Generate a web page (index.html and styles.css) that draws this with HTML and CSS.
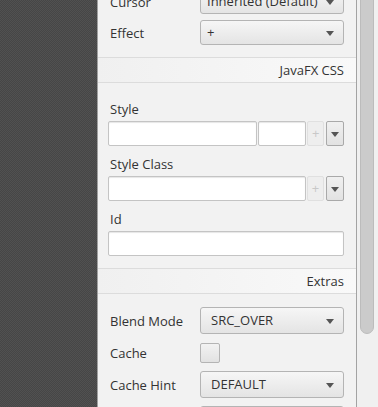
FILE: index.html
```html
<!DOCTYPE html>
<html lang="en">
<head>
  <meta charset="UTF-8" />
  <title>Inspector</title>
  <link rel="stylesheet" href="styles.css">
</head>
<body>
  <div class="canvas"></div>

  <div class="inspector">
    <div class="inspector-content">
      <div class="props">
        <div class="prop-label">Cursor</div>
        <div class="combo">Inherited (Default)</div>
        <div class="prop-label">Effect</div>
        <div class="combo">+</div>
      </div>

      <div class="section-header">JavaFX CSS</div>

      <div class="css-props">
        <div class="field-label">Style</div>
        <div class="field-row">
          <div class="text-field wide"></div>
          <div class="text-field small"></div>
          <div class="plus-btn">+</div>
          <div class="menu-btn"></div>
        </div>

        <div class="field-label">Style Class</div>
        <div class="field-row">
          <div class="text-field grow"></div>
          <div class="plus-btn">+</div>
          <div class="menu-btn"></div>
        </div>

        <div class="field-label">Id</div>
        <div class="field-row">
          <div class="text-field grow"></div>
        </div>
      </div>

      <div class="section-header">Extras</div>

      <div class="props extras">
        <div class="prop-label">Blend Mode</div>
        <div class="combo tall">SRC_OVER</div>
        <div class="prop-label">Cache</div>
        <div><div class="checkbox"></div></div>
        <div class="prop-label">Cache Hint</div>
        <div class="combo tall">DEFAULT</div>
        <div class="prop-label"></div>
        <div class="combo tall"></div>
      </div>
    </div>
  </div>

  <div class="scrollbar">
    <div class="thumb"></div>
  </div>
</body>
</html>
```

FILE: styles.css
```css
* {
  box-sizing: border-box;
}
body {
  margin: 0;
  height: 407px;
  overflow: hidden;
  display: flex;
  font-family: 'Open Sans', 'Segoe UI', sans-serif;
  font-size: 13px;
  color: #333;
  background: #f2f2f2;
}

.canvas {
  width: 98px;
  flex-shrink: 0;
  background: repeating-conic-gradient(#464646 0 25%, #515151 0 50%) 0 0 / 2px 2px;
  border-right: 1px solid #a0a0a0;
}

.inspector {
  width: 259px;
  flex-shrink: 0;
  background: #f2f2f2;
  border-right: 1px solid #a3a3a3;
  overflow: hidden;
}

.inspector-content {
  margin-top: -11px;
}

/* label / control grid */
.props {
  display: grid;
  grid-template-columns: 90px 144px;
  row-gap: 6px;
  align-items: center;
  padding: 0 12px 12px 12px;
}

.props.extras {
  padding-top: 13px;
  row-gap: 8px;
}

.prop-label {
  line-height: 18px;
  white-space: nowrap;
}

.combo {
  position: relative;
  height: 25px;
  line-height: 23px;
  padding-left: 6px;
  border: 1px solid #b4b4b4;
  border-radius: 3px;
  background: linear-gradient(#f6f6f6, #e4e4e4);
  white-space: nowrap;
  overflow: hidden;
}

.combo.tall {
  height: 27px;
  line-height: 25px;
  padding-left: 10px;
}

.combo::after {
  content: "";
  position: absolute;
  right: 9px;
  top: 50%;
  margin-top: -2px;
  border: 4px solid transparent;
  border-bottom: none;
  border-top: 5px solid #555;
}

.section-header {
  height: 26px;
  line-height: 24px;
  padding-right: 12px;
  text-align: right;
  border-top: 1px solid #dcdcdc;
  border-bottom: 1px solid #dcdcdc;
  background: linear-gradient(to right, #f0f0f0, #f9f9f9);
}

.css-props {
  padding: 17px 12px 12px 10px;
  display: flex;
  flex-direction: column;
}

.field-label {
  padding-left: 2px;
  line-height: 18px;
  margin-bottom: 3px;
}

.field-row {
  display: flex;
  gap: 1px;
  height: 25px;
  margin-bottom: 9px;
}

.field-row:last-child {
  margin-bottom: 0;
}

.text-field {
  height: 25px;
  background: #fff;
  border: 1px solid #c4c4c4;
  border-radius: 2px;
  box-shadow: inset 0 1px 1px #e6e6e6;
}

.text-field.wide {
  width: 150px;
}

.text-field.small {
  width: 49px;
}

.text-field.grow {
  flex: 1;
}

.plus-btn {
  width: 17px;
  height: 25px;
  line-height: 23px;
  text-align: center;
  color: #c8c8c8;
  background: #eeeeee;
  border: 1px solid #e0e0e0;
  border-radius: 2px;
}

.menu-btn {
  position: relative;
  width: 18px;
  height: 25px;
  margin-left: 1px;
  border: 1px solid #a9a9a9;
  border-radius: 2px;
  background: linear-gradient(#f0f0f0, #e2e2e2);
}

.menu-btn::after {
  content: "";
  position: absolute;
  left: 4px;
  top: 10px;
  border: 4px solid transparent;
  border-bottom: none;
  border-top: 5px solid #555;
}

.checkbox {
  width: 20px;
  height: 20px;
  margin-top: 1px;
  border: 1px solid #b4b4b4;
  border-radius: 2px;
  background: linear-gradient(#f2f2f2, #e2e2e2);
}

.scrollbar {
  flex: 1;
  background: #f0f0f0;
  padding: 0 4px 0 3px;
}

.thumb {
  height: 342px;
  margin-top: -8px;
  background: #cbcbcb;
  border: 1px solid #bcbcbc;
  border-radius: 0 0 7px 7px;
}
```
